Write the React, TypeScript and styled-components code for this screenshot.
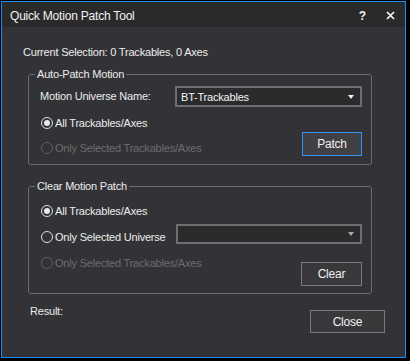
import { createGlobalStyle, styled } from "styled-components";

const GlobalStyle = createGlobalStyle`
  html, body {
    margin: 0;
    padding: 0;
    background: #000;
  }
  body {
    font-family: "Liberation Sans", Arial, sans-serif;
  }
`;

const Window = styled.div`
  margin: 1px 0 0 1px;
  width: 405px;
  height: 357px;
  box-sizing: border-box;
  border: 1px solid #1e8cf0;
  background: #333337;
  display: flex;
  flex-direction: column;
  color: #ececec;
  font-size: 11px;
  letter-spacing: -0.2px;
`;

const TitleBar = styled.div`
  height: 25px;
  flex: none;
  background: #2a2a2b;
  display: flex;
  align-items: center;
  padding: 2px 10px 0 8px;
  box-sizing: border-box;
  font-size: 12px;
  color: #f2f2f2;
`;

const Title = styled.span`
  flex: 1;
`;

const HelpGlyph = styled.span`
  font-weight: bold;
  margin-right: 20px;
`;

const Content = styled.div`
  display: flex;
  flex-direction: column;
  padding-top: 19px;
`;

const Line = styled.div<{ $left?: number }>`
  height: 13px;
  line-height: 13px;
  margin-left: ${(p) => p.$left ?? 21}px;
  white-space: nowrap;
`;

const GroupBox = styled.div<{ $top: number; $bottom: number }>`
  margin: ${(p) => p.$top}px 0 0 26px;
  width: 344px;
  box-sizing: border-box;
  border: 1px solid #6c6c6c;
  border-radius: 3px;
  padding: 0 9px ${(p) => p.$bottom}px 11px;
`;

const Legend = styled.div`
  width: fit-content;
  height: 13px;
  line-height: 13px;
  margin: -7px 0 0 -5px;
  padding: 0 2px;
  background: #333337;
`;

const Row = styled.div<{ $top: number; $align?: string }>`
  display: flex;
  align-items: ${(p) => p.$align ?? "flex-start"};
  justify-content: space-between;
  margin-top: ${(p) => p.$top}px;
`;

const Column = styled.div<{ $gap: number }>`
  display: flex;
  flex-direction: column;
  gap: ${(p) => p.$gap}px;
`;

const Label = styled.span`
  line-height: 13px;
`;

const Radio = styled.label<{ $disabled?: boolean; $top?: number }>`
  display: flex;
  align-items: center;
  gap: 2px;
  height: 16px;
  margin-top: ${(p) => p.$top ?? 0}px;
  padding-left: 1px;
  color: ${(p) => (p.$disabled ? "#6c6c6c" : "#ececec")};
  white-space: nowrap;
`;

const Circle = styled.span<{ $checked?: boolean; $disabled?: boolean }>`
  width: 12px;
  height: 12px;
  box-sizing: border-box;
  border-radius: 50%;
  border: 1px solid ${(p) => (p.$disabled ? "#5e5e5e" : "#e0e0e0")};
  display: flex;
  align-items: center;
  justify-content: center;
  &::after {
    content: "";
    display: ${(p) => (p.$checked ? "block" : "none")};
    width: 6px;
    height: 6px;
    border-radius: 50%;
    background: #e8e8e8;
  }
`;

const Select = styled.div<{ $width: number; $height: number; $dim?: boolean }>`
  width: ${(p) => p.$width}px;
  height: ${(p) => p.$height}px;
  box-sizing: border-box;
  border: 2px solid #6e6e6e;
  background: #2b2b2d;
  display: flex;
  align-items: center;
  padding: 0 6px 0 4px;
  color: #f4f4f4;
  &::after {
    content: "";
    margin-left: auto;
    border-left: 3.5px solid transparent;
    border-right: 3.5px solid transparent;
    border-top: 4px solid ${(p) => (p.$dim ? "#a8a8a8" : "#f4f4f4")};
  }
`;

const Button = styled.button<{ $width: number; $height: number; $top?: number; $focused?: boolean }>`
  width: ${(p) => p.$width}px;
  height: ${(p) => p.$height}px;
  margin-top: ${(p) => p.$top ?? 0}px;
  box-sizing: border-box;
  border: 1px solid ${(p) => (p.$focused ? "#2f94f5" : "#7a7a7a")};
  background: ${(p) => (p.$focused ? "#414145" : "#39393c")};
  color: #f0f0f0;
  font-family: inherit;
  font-size: 12px;
  letter-spacing: -0.2px;
  padding: 0;
  flex: none;
`;

const Footer = styled.div`
  display: flex;
  justify-content: space-between;
  align-items: flex-start;
  margin-top: 11px;
  padding: 0 20px 0 28px;
`;

const CloseIcon = () => (
  <svg width="9" height="9" viewBox="0 0 9 9">
    <path d="M1 1 L8 8 M8 1 L1 8" stroke="#f4f4f4" strokeWidth="1.7" />
  </svg>
);

export default function App() {
  return (
    <>
      <GlobalStyle />
      <Window>
        <TitleBar>
          <Title>Quick Motion Patch Tool</Title>
          <HelpGlyph>?</HelpGlyph>
          <CloseIcon />
        </TitleBar>
        <Content>
          <Line>Current Selection: 0 Trackables, 0 Axes</Line>

          <GroupBox $top={15} $bottom={8}>
            <Legend>Auto-Patch Motion</Legend>
            <Row $top={5} $align="center">
              <Label>Motion Universe Name:</Label>
              <Select $width={187} $height={21}>
                BT-Trackables
              </Select>
            </Row>
            <Row $top={8} $align="flex-end">
              <Column $gap={9}>
                <Radio>
                  <Circle $checked />
                  All Trackables/Axes
                </Radio>
                <Radio $disabled>
                  <Circle $disabled />
                  Only Selected Trackables/Axes
                </Radio>
              </Column>
              <Button $width={60} $height={24} $focused>
                Patch
              </Button>
            </Row>
          </GroupBox>

          <GroupBox $top={21} $bottom={7}>
            <Legend>Clear Motion Patch</Legend>
            <Row $top={10}>
              <Radio>
                <Circle $checked />
                All Trackables/Axes
              </Radio>
            </Row>
            <Row $top={5}>
              <Radio $top={5}>
                <Circle />
                Only Selected Universe
              </Radio>
              <Select $width={186} $height={20} $dim />
            </Row>
            <Row $top={10}>
              <Radio $disabled>
                <Circle $disabled />
                Only Selected Trackables/Axes
              </Radio>
              <Button $width={61} $height={24} $top={7}>
                Clear
              </Button>
            </Row>
          </GroupBox>

          <Footer>
            <Label>Result:</Label>
            <Button $width={75} $height={23} $top={5}>
              Close
            </Button>
          </Footer>
        </Content>
      </Window>
    </>
  );
}
